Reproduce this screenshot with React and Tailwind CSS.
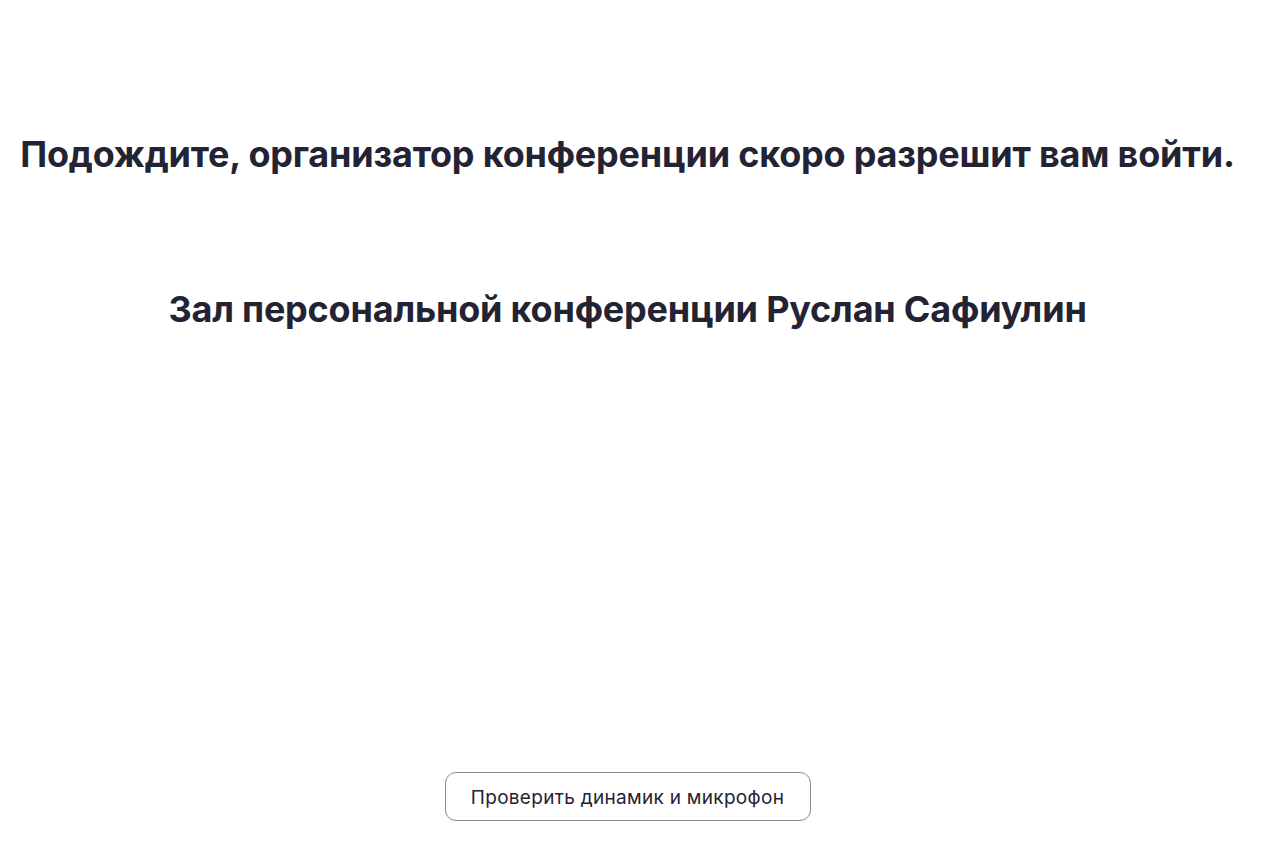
export default function App() {
  return (
    <div className="h-[845px] w-[1255px] bg-white flex flex-col items-center text-[#232333]" style={{ fontFamily: 'Inter, "Noto Sans", sans-serif' }}>
      <h1 className="mt-[132px] text-[36px] leading-[44px] font-bold tracking-[-0.2px] whitespace-nowrap">
        Подождите, организатор конференции скоро разрешит вам войти.
      </h1>
      <h2 className="mt-[111px] text-[36px] leading-[44px] font-bold tracking-[-0.2px] whitespace-nowrap">
        Зал персональной конференции Руслан Сафиулин
      </h2>
      <div className="flex-1" />
      <button className="mb-[24px] h-[49px] w-[366px] rounded-[11px] border border-[#8a8a8f] bg-white pt-[3px] text-[19px] tracking-[0.3px] text-[#232333]">
        Проверить динамик и микрофон
      </button>
    </div>
  );
}
